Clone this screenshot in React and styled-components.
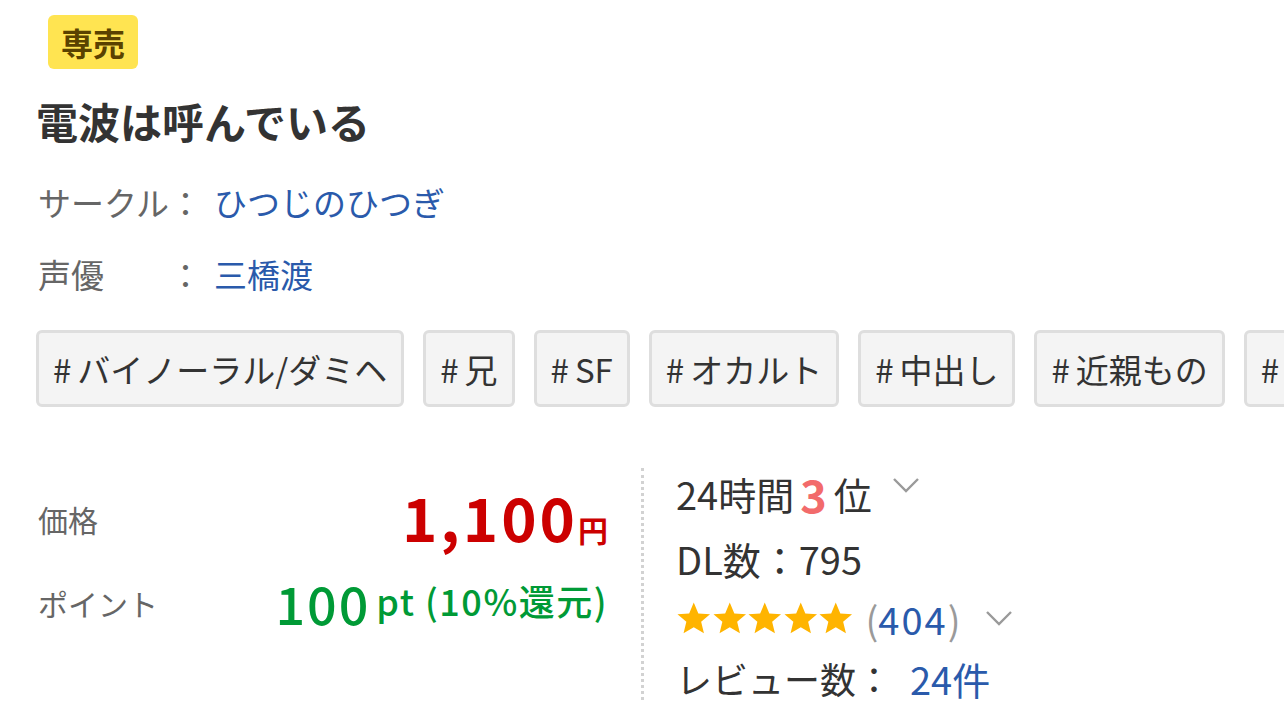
import React from "react";
import styled, { createGlobalStyle } from "styled-components";

const Global = createGlobalStyle`
  html, body { margin: 0; padding: 0; background: #fff; }
  body { font-family: "Noto Sans CJK JP", "Noto Sans", sans-serif; color: #333; overflow: hidden; }
`;

const Page = styled.div`
  width: 1284px;
  height: 721px;
  overflow: hidden;
  padding: 15px 0 0 36px;
  box-sizing: border-box;
`;

const Badge = styled.div`
  display: inline-flex;
  align-items: center;
  justify-content: center;
  margin-left: 12px;
  width: 90px;
  height: 54px;
  border-radius: 6px;
  background: #ffe451;
  color: #5a4200;
  font-size: 32px;
  font-weight: 700;
  line-height: 1;
`;

const Title = styled.h1`
  margin: 24px 0 0 0;
  font-size: 42px;
  font-weight: 700;
  line-height: 56px;
  color: #333;
`;

const InfoList = styled.div`
  margin-top: 25px;
  display: flex;
  flex-direction: column;
  gap: 16px;
`;

const InfoRow = styled.div`
  display: flex;
  align-items: center;
  font-size: 33px;
  line-height: 56px;
  padding-left: 2px;
`;

const InfoLabel = styled.span`
  width: 131px;
  color: #666;
`;

const Colon = styled.span`
  color: #666;
  width: 32px;
  text-align: center;
`;

const InfoLink = styled.a`
  margin-left: 13px;
  color: #2a5aab;
  text-decoration: none;
`;

const Tags = styled.div`
  margin-top: 28px;
  display: flex;
  gap: 19px;
  white-space: nowrap;
`;

const Tag = styled.div`
  flex: none;
  height: 77px;
  box-sizing: border-box;
  border: 3px solid #dedede;
  border-radius: 6px;
  background: #f4f4f4;
  padding: 0 14px;
  display: flex;
  align-items: center;
  font-size: 33px;
  color: #333;
`;

const Hash = styled.span`
  margin-right: 6px;
`;

const Stats = styled.div`
  margin-top: 61px;
  display: flex;
  align-items: flex-start;
`;

const PriceCol = styled.div`
  width: 608px;
  box-sizing: border-box;
  padding: 18px 33px 0 0;
  display: flex;
  flex-direction: column;
  gap: 22px;
  border-right: 3px dotted #d2d2d2;
  height: 232px;
`;

const PriceRow = styled.div`
  display: flex;
  align-items: center;
  justify-content: space-between;
  padding-left: 2px;
`;

const PriceLabel = styled.span`
  font-size: 30px;
  color: #666;
`;

const Price = styled.div`
  display: flex;
  align-items: baseline;
  color: #cc0000;
  font-weight: 700;
`;

const PriceNum = styled.span`
  font-size: 60px;
  line-height: 60px;
  letter-spacing: 3px;
`;

const Yen = styled.span`
  font-size: 30px;
  margin-left: 0;
`;

const Point = styled.div`
  display: flex;
  align-items: center;
  color: #009a36;
  font-weight: 500;
`;

const PointNum = styled.span`
  font-size: 52px;
  line-height: 60px;
  letter-spacing: 2px;
`;

const PointRest = styled.span`
  font-size: 36px;
  line-height: 44px;
  margin: 0 0 6px 6px;
  letter-spacing: 1.5px;
`;

const RankCol = styled.div`
  padding: 0 0 0 32px;
  display: flex;
  flex-direction: column;
`;

const RankLine = styled.div`
  display: flex;
  align-items: center;
  height: ${(p) => p.$h || 60}px;
  margin-bottom: ${(p) => p.$mb || 0}px;
  font-size: 38px;
  color: #333;
  white-space: nowrap;
`;

const RankNum = styled.span`
  color: #f26b6b;
  font-weight: 700;
  font-size: 45px;
  line-height: 1;
  margin: 0 6px;
  letter-spacing: 1px;
`;

const Chevron = styled.svg`
  flex: none;
  margin-left: ${(p) => p.$ml}px;
  align-self: ${(p) => (p.$top ? "flex-start" : "center")};
  margin-top: ${(p) => (p.$top ? 9 : 0)}px;
`;

const Stars = styled.span`
  display: inline-flex;
`;

const Paren = styled.span`
  color: #9a9a9a;
`;

const BlueText = styled.span`
  color: #2a5aab;
  letter-spacing: ${(p) => p.$ls || 0}px;
`;

const ReviewLabel = styled.span`
  font-size: 36px;
`;

const Gap = styled.span`
  display: inline-block;
  width: ${(p) => p.$w}px;
`;

function Star() {
  return (
    <svg width="35.5" height="36" viewBox="0 0 24 24">
      <path
        d="M12 1.6l3.1 7.3 7.9.6-6 5.1 1.9 7.7L12 18.2l-6.9 4.1 1.9-7.7-6-5.1 7.9-.6z"
        fill="#ffb400"
      />
    </svg>
  );
}

function Down({ top, ml }) {
  return (
    <Chevron $top={top} $ml={ml} width="28" height="16" viewBox="0 0 28 16">
      <path d="M2 2l12 12L26 2" fill="none" stroke="#9a9a9a" strokeWidth="2.4" />
    </Chevron>
  );
}

const tags = ["バイノーラル/ダミヘ", "兄", "SF", "オカルト", "中出し", "近親もの", "ボイス"];

export default function App() {
  return (
    <>
      <Global />
      <Page>
        <Badge>専売</Badge>
        <Title>電波は呼んでいる</Title>
        <InfoList>
          <InfoRow>
            <InfoLabel>サークル</InfoLabel>
            <Colon>：</Colon>
            <InfoLink href="#">ひつじのひつぎ</InfoLink>
          </InfoRow>
          <InfoRow>
            <InfoLabel>声優</InfoLabel>
            <Colon>：</Colon>
            <InfoLink href="#">三橋渡</InfoLink>
          </InfoRow>
        </InfoList>
        <Tags>
          {tags.map((t) => (
            <Tag key={t}>
              <Hash>#</Hash>
              {t}
            </Tag>
          ))}
        </Tags>
        <Stats>
          <PriceCol>
            <PriceRow>
              <PriceLabel>価格</PriceLabel>
              <Price>
                <PriceNum>1,100</PriceNum>
                <Yen>円</Yen>
              </Price>
            </PriceRow>
            <PriceRow>
              <PriceLabel>ポイント</PriceLabel>
              <Point>
                <PointNum>100</PointNum>
                <PointRest>pt (10%還元)</PointRest>
              </Point>
            </PriceRow>
          </PriceCol>
          <RankCol>
            <RankLine $h={50} $mb={10}>
              24時間<RankNum>3</RankNum>位
              <Down top ml={20} />
            </RankLine>
            <RankLine>DL数：795</RankLine>
            <RankLine>
              <Stars>
                <Star />
                <Star />
                <Star />
                <Star />
                <Star />
              </Stars>
              <Gap $w={12} />
              <Paren>(</Paren>
              <BlueText $ls={2}>404</BlueText>
              <Paren>)</Paren>
              <Down ml={24} />
            </RankLine>
            <RankLine>
              <ReviewLabel>レビュー数：</ReviewLabel>
              <Gap $w={18} />
              <BlueText>24件</BlueText>
            </RankLine>
          </RankCol>
        </Stats>
      </Page>
    </>
  );
}
